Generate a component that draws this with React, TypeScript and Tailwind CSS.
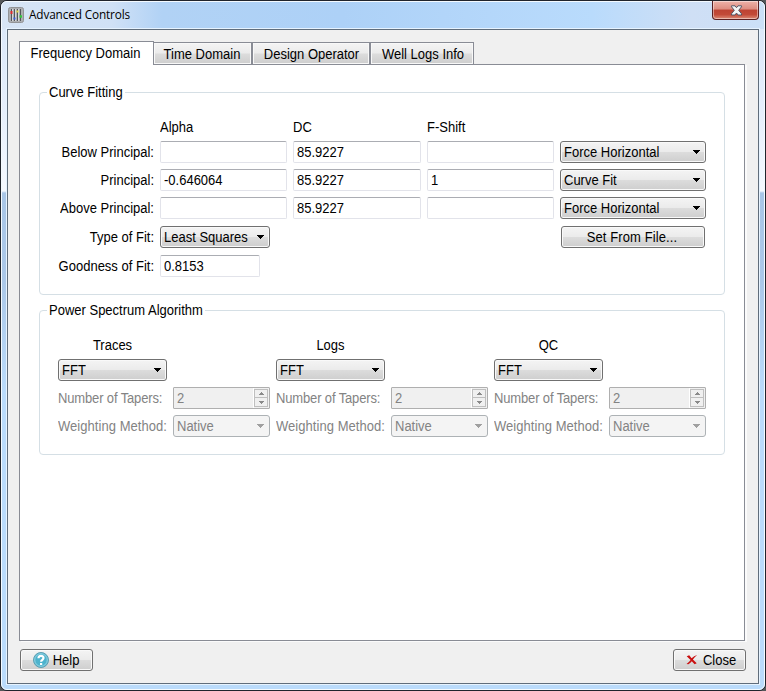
import type { ReactNode } from "react";

const face =
  "bg-[linear-gradient(to_bottom,#f4f4f4_0%,#ebebeb_48%,#dcdcdc_52%,#cecece_100%)]";

// Narrow, tall rendering of the dialog font.
function T({ children }: { children: ReactNode }) {
  return <span className="inline-block origin-[50%_13px] scale-y-[1.08] leading-[16px]">{children}</span>;
}

function Arrow({ disabled = false }: { disabled?: boolean }) {
  return (
    <svg width="7" height="4" viewBox="0 0 7 4" className="shrink-0" shapeRendering="crispEdges">
      <path d="M0 0H7V1H6V2H5V3H4V4H3V3H2V2H1V1H0Z" fill={disabled ? "#a0a0a0" : "#000"} />
    </svg>
  );
}

function Combo({ value, w, disabled = false }: { value: string; w: string; disabled?: boolean }) {
  return (
    <div
      className={`flex h-[22px] items-center justify-between rounded-[3px] border pr-[5px] pl-[3px] ${w} ${
        disabled
          ? "border-[#adb2b5] bg-[#f4f4f4] text-[#838383]"
          : `border-[#707070] shadow-[inset_0_0_0_1px_#f9f9f9] ${face}`
      }`}
    >
      <span className="pt-[2px]">
        <T>{value}</T>
      </span>
      <Arrow disabled={disabled} />
    </div>
  );
}

function Field({ value = "", w }: { value?: string; w: string }) {
  return (
    <div
      className={`flex h-[22px] items-center rounded-[2px] border border-[#e2e3ea] border-t-[#abadb3] bg-white pl-[3px] ${w}`}
    >
      <span className="pt-[2px]">
        <T>{value}</T>
      </span>
    </div>
  );
}

function Spin() {
  return (
    <div className="flex h-[22px] w-[97px] items-center justify-between rounded-[1px] border border-[#afafaf] bg-[#f0f0f0] pr-px pl-[3px] text-[#838383]">
      <span className="pt-[2px]">
        <T>2</T>
      </span>
      <div className="flex h-[20px] flex-col justify-center border-l border-white py-px">
        <div className="flex h-[9px] w-[14px] items-center justify-center border border-[#bfbfbf]">
          <svg width="5" height="3" viewBox="0 0 5 3" shapeRendering="crispEdges">
            <path d="M2 0H3V1H4V2H5V3H0V2H1V1H2Z" fill="#8a8a8a" />
          </svg>
        </div>
        <div className="flex h-[9px] w-[14px] items-center justify-center border border-t-0 border-[#bfbfbf]">
          <svg width="5" height="3" viewBox="0 0 5 3" shapeRendering="crispEdges">
            <path d="M0 0H5V1H4V2H3V3H2V2H1V1H0Z" fill="#8a8a8a" />
          </svg>
        </div>
      </div>
    </div>
  );
}

function Button({ children, w }: { children: ReactNode; w: string }) {
  return (
    <div
      className={`flex h-[22px] items-center justify-center rounded-[3px] border border-[#707070] shadow-[inset_0_0_0_1px_#f9f9f9] ${face} ${w}`}
    >
      {children}
    </div>
  );
}

function Group({ title, h, children }: { title: string; h: string; children: ReactNode }) {
  return (
    <div className={`w-[686px] rounded-[4px] border border-[#d5dfe5] ${h}`}>
      <div className="-mt-[9px] ml-[7px] flex h-[18px]">
        <span className="bg-white px-[2px] pt-px">
          <T>{title}</T>
        </span>
      </div>
      {children}
    </div>
  );
}

function Label({ children }: { children: ReactNode }) {
  return (
    <span className="mr-[6px] w-[114px] pt-[2px] text-right">
      <T>{children}</T>
    </span>
  );
}

function FitRow({ label, alpha, shift, mode }: { label: string; alpha?: string; shift?: string; mode: string }) {
  return (
    <div className="mb-[6px] flex h-[22px] items-center">
      <Label>{label}</Label>
      <Field w="w-[127px] mr-[6px]" value={alpha} />
      <Field w="w-[128px] mr-[6px]" value="85.9227" />
      <Field w="w-[127px] mr-[6px]" value={shift} />
      <Combo w="w-[146px]" value={mode} />
    </div>
  );
}

function Spectrum({ title }: { title: string }) {
  return (
    <div className="w-[218px]">
      <div className="h-[20px] w-[109px] pt-[3px] text-center">
        <T>{title}</T>
      </div>
      <div className="mt-[4px]">
        <Combo w="w-[109px]" value="FFT" />
      </div>
      <div className="mt-[6px] flex items-center text-[#838383]">
        <span className="w-[115px] pt-[2px] tracking-[-0.14px]">
          <T>Number of Tapers:</T>
        </span>
        <Spin />
      </div>
      <div className="mt-[6px] flex items-center text-[#838383]">
        <span className="w-[115px] pt-[2px] tracking-[0.05px]">
          <T>Weighting Method:</T>
        </span>
        <Combo w="w-[97px]" value="Native" disabled />
      </div>
    </div>
  );
}

function Tab({ children, w }: { children: ReactNode; w: string }) {
  return (
    <div
      className={`flex h-[22px] items-center justify-center border border-b-0 border-[#898c95] pt-[2px] shadow-[inset_0_0_0_1px_#f8f8f8] ${face} ${w}`}
    >
      <T>{children}</T>
    </div>
  );
}

function TitleBar() {
  return (
    <div className="flex h-[27px] justify-between pr-[5px] pl-[6px]">
      <div className="flex h-[25px] items-center">
        <svg width="16" height="16" viewBox="0 0 16 16" className="mt-[1px]">
          <rect x=".5" y=".5" width="15" height="15" rx="2" fill="#aeb0b3" stroke="#929497" />
          <path d="M3.500 2V14M6.500 2V14M9.500 2V14M12.500 2V14" stroke="#55575b" />
          <path d="M4.500 2V14M7.500 2V14M10.500 2V14" stroke="#d5d7d9" />
          <path d="M2.500 5.500h2" stroke="#e02b2b" strokeWidth="3" />
          <path d="M5.500 11.500h2" stroke="#3560e8" strokeWidth="2" />
          <path d="M8.500 4.500h2" stroke="#e4dc42" strokeWidth="2" />
          <path d="M11.500 9.500h2.500" stroke="#35c940" strokeWidth="2.500" />
        </svg>
        <span className="ml-[5px] pb-px font-['Open_Sans','Noto_Sans',sans-serif] text-[11.8px] tracking-[-0.14px]">
          Advanced Controls
        </span>
      </div>
      <div className="-mt-px flex h-[19px] w-[47px] items-center justify-center rounded-b-[4px] border border-t-0 border-[#5a2022] bg-[linear-gradient(to_bottom,#eeb2a9_0%,#dd8d80_45%,#bd4333_50%,#c24a38_75%,#dc8a76_100%)] shadow-[inset_0_0_0_1px_#ffffff70]">
        <svg width="13" height="11" viewBox="0 0 13 11" className="ml-[2px]">
          <path
            d="M1.500 .8H5L6.500 2.700 8 .8H11.500V1.800L8.700 5.300 11.500 8.800V10H8L6.500 8 5 10H1.500V8.800L4.300 5.300 1.500 1.800Z"
            fill="#f5f5f5"
            stroke="#535666"
          />
        </svg>
      </div>
    </div>
  );
}

export default function App() {
  return (
    <div className="h-[691px] w-[766px] overflow-hidden bg-[#55585a] font-['Liberation_Sans',Arial,sans-serif] text-[13px] leading-[16px] whitespace-nowrap text-black">
      <div className="h-[691px] w-[766px] rounded-[7px] border border-[#20242c] bg-[linear-gradient(to_bottom,#d8e6f8_0px,#e6effc_110px,#f5f9ff_190px,#a9c6e7_192px,#abc8e9_280px,#badbfb_390px,#badbfb_100%)]">
        <div className="h-[689px] w-[764px] rounded-[6px] border border-[#f4faff]">
          <div className="h-[27px] rounded-t-[5px] bg-[linear-gradient(to_right,#d7e5f6_0px,#d0e1f6_110px,#b1d2f5_160px,#add1f7_340px,#b9dbfc_590px,#cfdff5_690px,#cbe0f7_100%)]">
            <TitleBar />
          </div>
          <div className="ml-[5px] h-[655px] w-[752px] border border-[#606d7b] bg-[#f0f0f0] pt-[11px] pl-[11px] shadow-[0_0_0_1px_#e6f3ff]">
            <div className="flex h-[23px] items-end">
              <div className="-mb-px flex h-[24px] w-[135px] items-center justify-center border border-b-0 border-[#898c95] bg-white pt-px pr-[2px]">
                <T>Frequency Domain</T>
              </div>
              <Tab w="w-[98px] border-l-0 pr-px">Time Domain</Tab>
              <Tab w="w-[118px] pl-px">Design Operator</Tab>
              <Tab w="w-[104px] pl-[2px]">Well Logs Info</Tab>
            </div>
            <div className="h-[577px] w-[726px] border border-[#898c95] bg-white pt-[27px] pl-[19px] shadow-[2px_1px_0_0_#fbfbfb]">
              <Group title="Curve Fitting" h="h-[203px]">
                <div className="mt-[16px] flex h-[20px] items-center pl-[120px]">
                  <span className="w-[133px]">
                    <T>Alpha</T>
                  </span>
                  <span className="w-[134px]">
                    <T>DC</T>
                  </span>
                  <T>F-Shift</T>
                </div>
                <div className="mt-[3px]">
                  <FitRow label="Below Principal:" mode="Force Horizontal" />
                  <FitRow label="Principal:" alpha="-0.646064" shift="1" mode="Curve Fit" />
                  <FitRow label="Above Principal:" mode="Force Horizontal" />
                </div>
                <div className="mt-[7px] flex items-center">
                  <Label>Type of Fit:</Label>
                  <Combo w="w-[110px]" value="Least Squares" />
                  <div className="ml-[291px]">
                    <Button w="w-[144px]">
                      <span className="pt-[2px] pr-[2px] tracking-[0.1px]">
                        <T>Set From File...</T>
                      </span>
                    </Button>
                  </div>
                </div>
                <div className="mt-[7px] flex items-center">
                  <Label>Goodness of Fit:</Label>
                  <Field w="w-[100px]" value="0.8153" />
                </div>
              </Group>
              <div className="mt-[15px]">
                <Group title="Power Spectrum Algorithm" h="h-[145px]">
                  <div className="mt-[15px] flex pl-[18px]">
                    <Spectrum title="Traces" />
                    <Spectrum title="Logs" />
                    <Spectrum title="QC" />
                  </div>
                </Group>
              </div>
            </div>
            <div className="mt-[8px] flex w-[727px] justify-between pl-px">
              <Button w="w-[73px] pr-px">
                <svg width="16" height="16" viewBox="0 0 16 16" className="mr-[4px]">
                  <circle cx="8" cy="8" r="7.500" fill="#4db3cd" stroke="#5f9fb2" />
                  <circle cx="8" cy="8" r="6.300" fill="none" stroke="#a4dbe8" strokeWidth=".8" />
                  <path
                    d="M5.500 6.300C5.500 3.100 10.500 3.200 10.500 6.100 10.500 7.800 8.100 7.900 8.100 9.800M8.100 10.900V12.900"
                    fill="none"
                    stroke="#fff"
                    strokeWidth="2.200"
                  />
                </svg>
                <span className="pt-[2px]">
                  <T>Help</T>
                </span>
              </Button>
              <Button w="w-[73px] pl-[3px]">
                <svg width="12" height="12" viewBox="0 0 12 12" className="mr-[5px]">
                  <path
                    d="M.7 2.200L3.200 1.200 5.600 4.300Q8 1.800 11.200 1Q8.600 3 6.900 5.500L10.700 9.300 8.600 10.300 5.800 7.200Q4.200 9 2.300 10.300L.5 10Q3 8.300 4.600 6Z"
                    fill="#c90e0e"
                  />
                </svg>
                <span className="pt-[2px]">
                  <T>Close</T>
                </span>
              </Button>
            </div>
          </div>
        </div>
      </div>
    </div>
  );
}
